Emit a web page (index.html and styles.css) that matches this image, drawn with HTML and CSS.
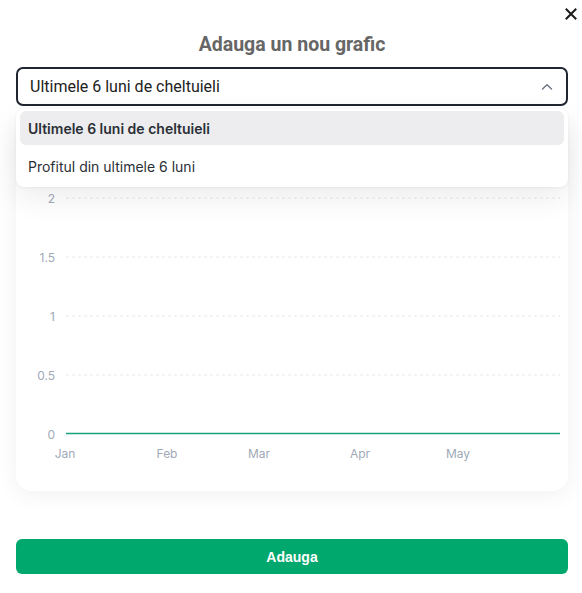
FILE: index.html
```html
<!DOCTYPE html>
<html lang="ro">
<head>
    <meta charset="UTF-8">
    <meta name="viewport" content="width=device-width, initial-scale=1.0">
    <title>Adauga un nou grafic</title>
    <link rel="stylesheet" href="styles.css">
</head>
<body>
    <!-- Close button -->
    <button class="close-btn" aria-label="Inchide">
        <svg width="12" height="12" viewBox="0 0 12 12">
            <path d="M1.5 1.5 L10.5 10.5 M10.5 1.5 L1.5 10.5" stroke="#1a1a1a" stroke-width="2" stroke-linecap="square"/>
        </svg>
    </button>

    <div class="modal">
        <h2 class="modal-title">Adauga un nou grafic</h2>

        <!-- Chart type select, opened -->
        <div class="select-wrap">
            <div class="select-box">
                <span>Ultimele 6 luni de cheltuieli</span>
                <svg class="chevron" width="12" height="8" viewBox="0 0 12 8">
                    <path d="M1.5 6 L6 1.8 L10.5 6" fill="none" stroke="#6b7280" stroke-width="1.4" stroke-linecap="round" stroke-linejoin="round"/>
                </svg>
            </div>
            <ul class="dropdown">
                <li class="option selected">Ultimele 6 luni de cheltuieli</li>
                <li class="option">Profitul din ultimele 6 luni</li>
            </ul>
        </div>

        <!-- Chart preview -->
        <div class="chart-card">
            <svg class="chart" width="552" height="373" viewBox="0 0 552 373">
                <g class="grid">
                    <line x1="50" y1="80" x2="544" y2="80"/>
                    <line x1="50" y1="139" x2="544" y2="139"/>
                    <line x1="50" y1="198" x2="544" y2="198"/>
                    <line x1="50" y1="257" x2="544" y2="257"/>
                </g>
                <g class="y-labels">
                    <text x="39" y="85">2</text>
                    <text x="39" y="144">1.5</text>
                    <text x="39" y="203">1</text>
                    <text x="39" y="262">0.5</text>
                    <text x="39" y="321">0</text>
                </g>
                <line class="data-line" x1="50" y1="315.5" x2="544" y2="315.5"/>
                <g class="x-labels">
                    <text x="49" y="340">Jan</text>
                    <text x="151" y="340">Feb</text>
                    <text x="243" y="340">Mar</text>
                    <text x="344" y="340">Apr</text>
                    <text x="442" y="340">May</text>
                </g>
            </svg>
        </div>

        <button class="add-btn">Adauga</button>
    </div>
</body>
</html>
```

FILE: styles.css
```css
body {
    margin: 0;
    padding: 0;
    background-color: #FFFFFF;
    font-family: "Inter", "Noto Sans", sans-serif;
}

/* Close "x" in the corner */
.close-btn {
    position: absolute;
    top: 7px;
    right: 3px;
    width: 16px;
    height: 14px;
    padding: 0;
    border: none;
    background: none;
    display: flex;
    align-items: center;
    justify-content: center;
    cursor: pointer;
}

.modal {
    padding: 34px 14px 0 16px;
}

.modal-title {
    margin: 0 0 11px;
    font-family: Roboto, "Liberation Sans", sans-serif;
    font-size: 19.5px;
    line-height: 22px;
    font-weight: 700;
    color: #666666;
    text-align: center;
}

/* Styling for the select */
.select-wrap {
    position: relative;
}

.select-box {
    height: 39px;
    box-sizing: border-box;
    border: 2px solid #1f2630;
    border-radius: 7px;
    padding: 0 13px 0 12px;
    display: flex;
    align-items: center;
    justify-content: space-between;
    font-family: Roboto, "Liberation Sans", sans-serif;
    font-size: 16px;
    color: #222222;
}

.chevron {
    margin-top: 1px;
}

.dropdown {
    position: absolute;
    top: 42px;
    left: 0;
    right: 0;
    z-index: 2;
    list-style: none;
    margin: 0;
    padding: 2px 4px 4px;
    background-color: #FFFFFF;
    border-radius: 8px;
    box-shadow: 0 10px 30px rgba(0, 0, 0, 0.08), 0 1px 3px rgba(0, 0, 0, 0.05);
    display: flex;
    flex-direction: column;
    gap: 4px;
}

.option {
    height: 34px;
    display: flex;
    align-items: center;
    padding: 0 8px;
    border-radius: 6px;
    font-size: 14px;
    color: #2a2f36;
}

.option.selected {
    background-color: #ededef;
    font-weight: 600;
}

/* Styling for the chart card */
.chart-card {
    margin-top: 12px;
    height: 373px;
    border-radius: 16px;
    background-color: #FFFFFF;
    box-shadow: 0 4px 22px rgba(0, 0, 0, 0.06);
    overflow: hidden;
}

.chart {
    display: block;
}

.grid line {
    stroke: #e6e8ec;
    stroke-width: 1;
    stroke-dasharray: 3 3;
}

.y-labels text {
    font-size: 12px;
    fill: #a0a9b8;
    text-anchor: end;
}

.x-labels text {
    font-size: 12px;
    fill: #a0a9b8;
    text-anchor: middle;
}

.data-line {
    stroke: #16a37a;
    stroke-width: 1.6;
}

/* Styling for the button */
.add-btn {
    display: block;
    width: 100%;
    height: 35px;
    margin-top: 48px;
    border: none;
    border-radius: 6px;
    background-color: #00a86d;
    color: #FFFFFF;
    font-family: "Liberation Sans", Arial, sans-serif;
    font-size: 14px;
    font-weight: 700;
    cursor: pointer;
}
```
